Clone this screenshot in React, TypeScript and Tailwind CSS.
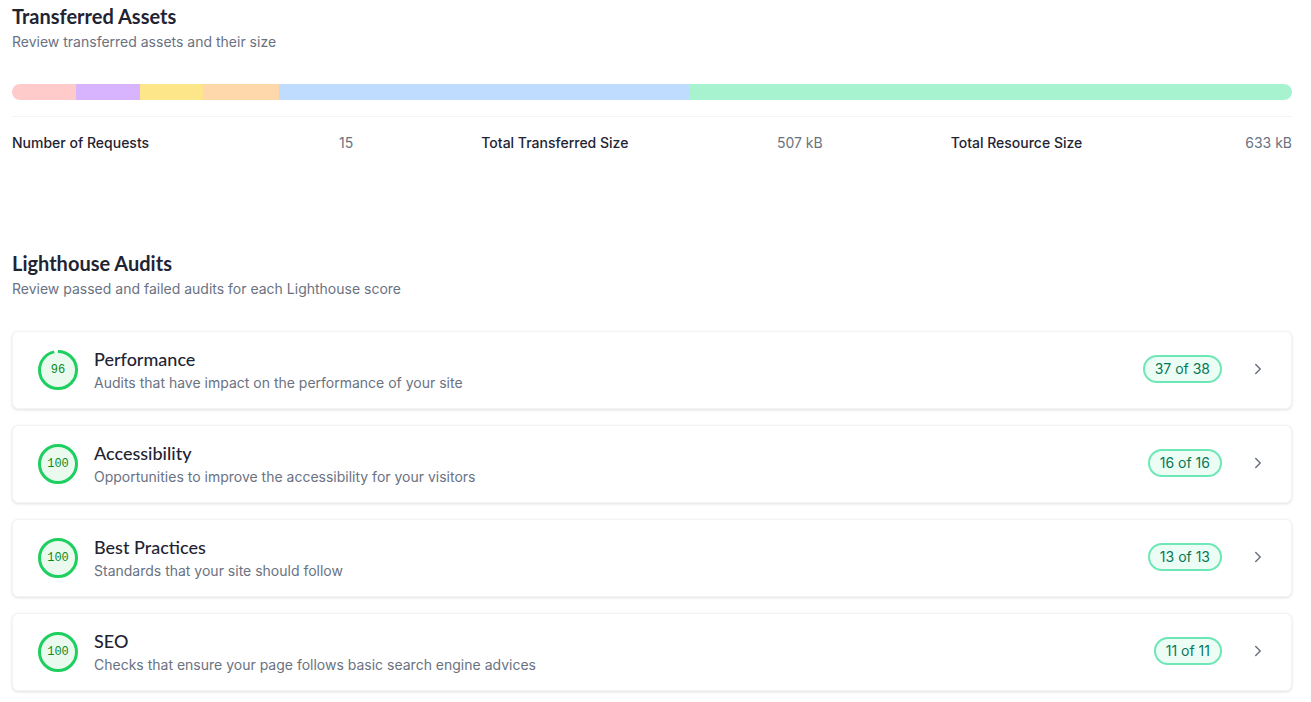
import { ChevronRight } from 'lucide-react';

const segments = [
  { color: 'bg-[#fecaca]', width: 64 },
  { color: 'bg-[#d8b4fe]', width: 64 },
  { color: 'bg-[#fde68a]', width: 63 },
  { color: 'bg-[#fed7aa]', width: 76 },
  { color: 'bg-[#bfdbfe]', width: 411 },
  { color: 'bg-[#a7f3d0]', width: 602 },
];

const stats = [
  { label: 'Number of Requests', value: '15' },
  { label: 'Total Transferred Size', value: '507 kB' },
  { label: 'Total Resource Size', value: '633 kB' },
];

const audits = [
  { score: 96, title: 'Performance', desc: 'Audits that have impact on the performance of your site', passed: '37 of 38' },
  { score: 100, title: 'Accessibility', desc: 'Opportunities to improve the accessibility for your visitors', passed: '16 of 16' },
  { score: 100, title: 'Best Practices', desc: 'Standards that your site should follow', passed: '13 of 13' },
  { score: 100, title: 'SEO', desc: 'Checks that ensure your page follows basic search engine advices', passed: '11 of 11' },
];

function Gauge({ score }: { score: number }) {
  const r = 18.5;
  const c = 2 * Math.PI * r;
  return (
    <div className="relative mt-[2px] w-10 h-10 shrink-0">
      <svg width="40" height="40" viewBox="0 0 40 40" className="-rotate-90">
        <circle cx="20" cy="20" r={r} fill="#ebfaef" stroke="none" />
        <circle
          cx="20"
          cy="20"
          r={r}
          fill="none"
          stroke="#1ccf5f"
          strokeWidth="3"
          strokeDasharray={`${(c * score) / 100} ${c}`}
        />
      </svg>
      <span className="absolute inset-0 flex items-center justify-center text-xs text-[#0a8a1e] font-['Liberation_Mono',monospace]">
        {score}
      </span>
    </div>
  );
}

export default function App() {
  return (
    <div className="bg-white pl-3 pt-[2px] pb-4 text-gray-900 font-['Inter',sans-serif]">
      <div className="w-[1280px]">
        {/* Transferred Assets */}
        <section>
          <h2 className="text-xl leading-7 font-bold text-[#1f2433] font-['Lato',sans-serif]">Transferred Assets</h2>
          <p className="mt-[2px] text-sm text-gray-500">Review transferred assets and their size</p>

          <div className="mt-8 flex h-4 w-full overflow-hidden rounded-full">
            {segments.map((s, i) => (
              <div key={i} className={`h-full ${s.color}`} style={{ flexGrow: s.width, flexBasis: 0 }} />
            ))}
          </div>

          <div className="mt-4 border-t border-gray-100 py-4 grid grid-cols-3 gap-x-32">
            {stats.map((s) => (
              <div key={s.label} className="flex justify-between text-sm">
                <span className="font-medium text-[#1f2433]">{s.label}</span>
                <span className="text-gray-500">{s.value}</span>
              </div>
            ))}
          </div>
        </section>

        {/* Lighthouse Audits */}
        <section className="mt-20">
          <h2 className="text-xl leading-7 font-bold text-[#1f2433] font-['Lato',sans-serif]">Lighthouse Audits</h2>
          <p className="mt-[2px] text-sm text-gray-500">Review passed and failed audits for each Lighthouse score</p>

          <div className="mt-8 flex flex-col gap-4">
            {audits.map((a) => (
              <div
                key={a.title}
                className="flex items-center rounded-md border border-gray-100 bg-white pl-[25px] pr-6 pt-[13px] pb-[15px] shadow-[0_1px_3px_rgba(0,0,0,0.12)]"
              >
                <Gauge score={a.score} />
                <div className="ml-4 flex-1">
                  <div className="text-lg leading-7 font-medium text-[#1f2433] font-['Lato',sans-serif]">{a.title}</div>
                  <div className="text-sm text-gray-500">{a.desc}</div>
                </div>
                <span className="rounded-full border-2 border-[#6ee7b7] bg-[#ecfdf5] px-2.5 py-[2px] text-sm text-[#047857]">
                  {a.passed}
                </span>
                <ChevronRight size={18} className="ml-[27px] text-gray-500" />
              </div>
            ))}
          </div>
        </section>
      </div>
    </div>
  );
}
